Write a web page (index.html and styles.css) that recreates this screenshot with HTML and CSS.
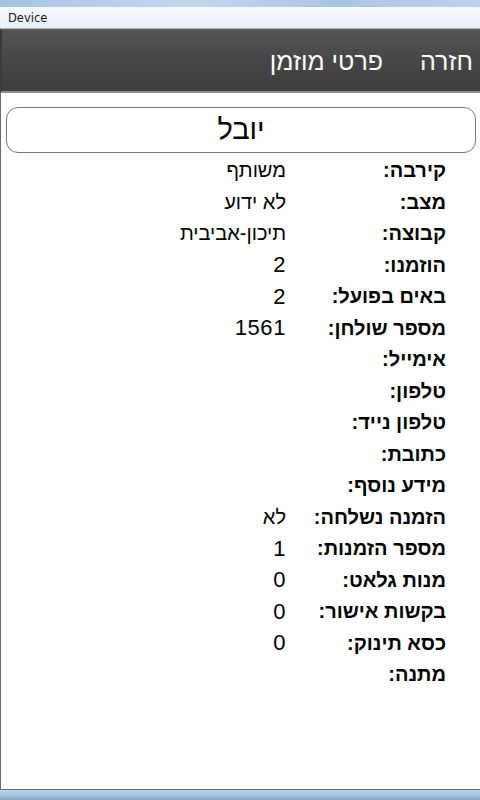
FILE: index.html
```html
<!DOCTYPE html>
<html lang="he">
<head>
<meta charset="utf-8">
<title>Device</title>
<link rel="stylesheet" href="styles.css">
</head>
<body>
<div class="window">
  <div class="glass"></div>
  <div class="titlebar"><span class="title">Device</span></div>
  <div class="appbar" dir="rtl">
    <span class="back">חזרה</span>
    <span class="apptitle">פרטי מוזמן</span>
  </div>
  <div class="content" dir="rtl">
    <div class="namebox">יובל</div>
    <div class="details">
      <div class="label">קירבה:</div><div class="value">משותף</div>
      <div class="label">מצב:</div><div class="value">לא ידוע</div>
      <div class="label">קבוצה:</div><div class="value">תיכון-אביבית</div>
      <div class="label">הוזמנו:</div><div class="value num">2</div>
      <div class="label">באים בפועל:</div><div class="value num">2</div>
      <div class="label">מספר שולחן:</div><div class="value num">1561</div>
      <div class="label">אימייל:</div><div class="value"></div>
      <div class="label">טלפון:</div><div class="value"></div>
      <div class="label">טלפון נייד:</div><div class="value"></div>
      <div class="label">כתובת:</div><div class="value"></div>
      <div class="label">מידע נוסף:</div><div class="value"></div>
      <div class="label">הזמנה נשלחה:</div><div class="value">לא</div>
      <div class="label">מספר הזמנות:</div><div class="value num">1</div>
      <div class="label">מנות גלאט:</div><div class="value num">0</div>
      <div class="label">בקשות אישור:</div><div class="value num">0</div>
      <div class="label">כסא תינוק:</div><div class="value num">0</div>
      <div class="label">מתנה:</div><div class="value"></div>
    </div>
  </div>
  <div class="bottomframe"></div>
</div>
</body>
</html>
```

FILE: styles.css
```css
html, body {
  margin: 0;
  padding: 0;
  width: 480px;
  height: 800px;
  overflow: hidden;
  background: #ffffff;
}

.window {
  display: flex;
  flex-direction: column;
  height: 800px;
  font-family: "Liberation Sans", Arial, sans-serif;
}

.glass {
  height: 7px;
  background: linear-gradient(to right, #a7c3e3, #c3d8ee 40%, #a9c4e2 70%, #bcd3ec);
}

.titlebar {
  height: 21px;
  display: flex;
  align-items: center;
  padding-left: 8px;
  background: linear-gradient(to bottom, #f7fafd, #e9f0f8);
  border-bottom: 1px solid #a8b4c2;
}

.title {
  color: #1a1a1a;
  font-family: "DejaVu Sans", "Liberation Sans", sans-serif;
  font-size: 11.5px;
}

.appbar {
  height: 62px;
  display: flex;
  align-items: center;
  gap: 37px;
  padding-right: 7px;
  background: linear-gradient(to bottom, #5e5e5e 0px, #545454 2px, #474747 30px, #3e3e3e 100%);
  border-left: 2px solid #3a3a3a;
  border-bottom: 2px solid #8e8e8e;
  color: #ffffff;
  font-size: 25px;
}

.back, .apptitle {
  line-height: 1;
  padding-top: 2px;
}

.content {
  flex: 1;
  border-left: 1px solid #6a6a6a;
  border-bottom: 1px solid #6a6a6a;
  padding: 14px 4px 0 5px;
  background: #ffffff;
}

.namebox {
  height: 42px;
  border: 1.5px solid #777777;
  border-radius: 12px;
  display: flex;
  align-items: center;
  justify-content: center;
  font-size: 29px;
  color: #000000;
  padding-bottom: 2px;
}

.details {
  display: grid;
  grid-template-columns: 160px auto;
  grid-auto-rows: 31.5px;
  margin-top: 2px;
  padding-right: 30px;
  align-items: center;
}

.label {
  font-weight: bold;
  font-size: 20px;
  color: #000000;
}

.value {
  font-size: 20px;
  color: #000000;
}

.num {
  font-size: 22px;
  letter-spacing: 0.6px;
}

.bottomframe {
  height: 10px;
  background: linear-gradient(to bottom, #bcd4ee, #a6c3e6 50%, #8aa4c4);
}
```
